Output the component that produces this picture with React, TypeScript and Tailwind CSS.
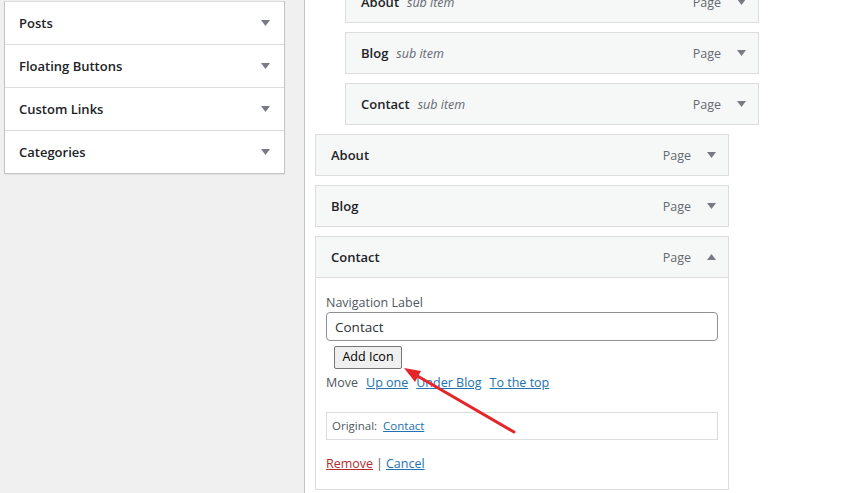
import React from "react";

const Caret = ({ up = false }: { up?: boolean }) => (
  <svg width="9" height="6" viewBox="0 0 9 6" className="shrink-0">
    {up ? <path d="M0 6 L4.5 0 L9 6 Z" fill="#787c82" /> : <path d="M0 0 L9 0 L4.5 6 Z" fill="#787c82" />}
  </svg>
);

const sections = ["Posts", "Floating Buttons", "Custom Links", "Categories"];

type MenuItem = { title: string; sub?: boolean };

const items: MenuItem[] = [
  { title: "About", sub: true },
  { title: "Blog", sub: true },
  { title: "Contact", sub: true },
  { title: "About" },
  { title: "Blog" },
];

const ItemBar = ({ title, sub, up }: MenuItem & { up?: boolean }) => (
  <div className="h-[40px] flex items-center pl-[15px] pr-[12px]">
    <span className="mt-[2px] text-[13px] font-semibold text-[#1d2327]">{title}</span>
    {sub && <span className="mt-[2px] ml-[8px] text-[12.5px] italic text-[#646970]">sub item</span>}
    <span className="ml-auto mt-[3px] text-[12.5px] text-[#646970] mr-[16px]">Page</span>
    <Caret up={up} />
  </div>
);

export default function App() {
  return (
    <div className="relative w-[858px] h-[493px] overflow-hidden bg-white flex font-['Open_Sans',sans-serif]">
      {/* left column */}
      <div className="w-[305px] h-full bg-[#f0f0f1] border-r border-[#c3c4c7] pl-[4px] pt-[1px]">
        <div className="w-[281px] bg-white border-x border-b border-[#c3c4c7] shadow-[0_1px_1px_rgba(0,0,0,0.06)]">
          {sections.map((s) => (
            <div key={s} className="h-[43px] border-t border-[#dcdcde] flex items-center pl-[14px] pr-[14px]">
              <span className="mt-[2px] text-[13px] font-semibold text-[#1d2327]">{s}</span>
              <span className="ml-auto">
                <Caret />
              </span>
            </div>
          ))}
        </div>
      </div>

      {/* menu structure */}
      <div className="flex-1 pl-[10px] mt-[-19px] flex flex-col gap-[9px]">
        {items.map((it, i) => (
          <div
            key={i}
            className={`w-[414px] border border-[#dcdcde] bg-[#f6f7f7] ${it.sub ? "ml-[30px]" : ""}`}
          >
            <ItemBar {...it} />
          </div>
        ))}

        <div className="w-[414px] border border-[#dcdcde] bg-white">
          <div className="bg-[#f6f7f7] border-b border-[#dcdcde]">
            <ItemBar title="Contact" up />
          </div>
          <div className="px-[10px] pt-[16px] pb-[16px]">
            <div className="text-[12.5px] leading-[18px] text-[#50575e]">Navigation Label</div>
            <input
              readOnly
              value="Contact"
              className="w-full h-[29px] border border-[#8c8f94] rounded-[4px] px-[8px] text-[13.5px] text-[#2c3338] outline-none"
            />
            <button className="ml-[8px] mt-[5px] h-[23px] w-[68px] bg-[#efefef] border border-[#767676] rounded-[2px] text-[12.5px] text-black leading-none">
              Add Icon
            </button>
            <div className="mt-[5px] text-[12.5px] leading-[18px] text-[#50575e] flex gap-[8px]">
              <span>Move</span>
              <a className="text-[#2271b1] underline">Up one</a>
              <a className="text-[#2271b1] underline">Under Blog</a>
              <a className="text-[#2271b1] underline">To the top</a>
            </div>
            <div className="mt-[20px] h-[28px] border border-[#dcdcde] flex items-center px-[5px] text-[11.5px] text-[#50575e]">
              <span>Original:</span>
              <a className="ml-[6px] text-[#2271b1] underline">Contact</a>
            </div>
            <div className="mt-[15px] text-[12.5px] leading-[18px] text-[#50575e]">
              <a className="text-[#b32d2e] underline">Remove</a>
              <span className="mx-[3px]">|</span>
              <a className="text-[#2271b1] underline">Cancel</a>
            </div>
          </div>
        </div>
      </div>

      {/* red annotation arrow */}
      <svg className="absolute left-0 top-0 pointer-events-none" width="858" height="493">
        <line x1="514" y1="432" x2="414" y2="374" stroke="#e3262a" strokeWidth="3" strokeLinecap="round" />
        <path d="M404 368 L421 371 L415 382 Z" fill="#e3262a" />
      </svg>
    </div>
  );
}
